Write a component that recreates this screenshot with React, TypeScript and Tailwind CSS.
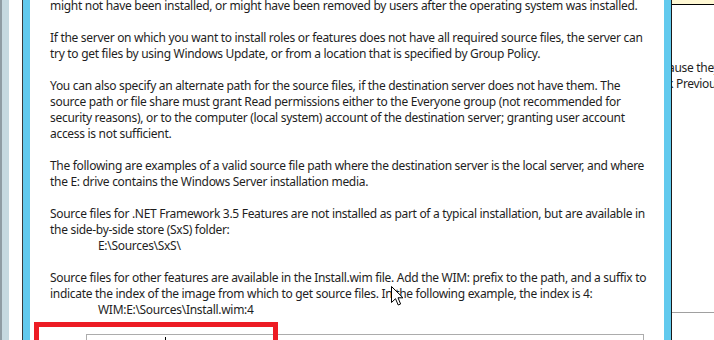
import React from "react";

const paragraphs: string[][] = [
  ["might not have been installed, or might have been removed by users after the operating system was installed."],
  [
    "If the server on which you want to install roles or features does not have all required source files, the server can",
    "try to get files by using Windows Update, or from a location that is specified by Group Policy.",
  ],
  [
    "You can also specify an alternate path for the source files, if the destination server does not have them. The",
    "source path or file share must grant Read permissions either to the Everyone group (not recommended for",
    "security reasons), or to the computer (local system) account of the destination server; granting user account",
    "access is not sufficient.",
  ],
  [
    "The following are examples of a valid source file path where the destination server is the local server, and where",
    "the E: drive contains the Windows Server installation media.",
  ],
];

/* ─── Mouse pointer overlay ─────────────────────────── */
function Pointer() {
  return (
    <svg width="13" height="21" viewBox="0 0 13 21" className="absolute left-[361px] top-[286px]">
      <path d="M0.5 0.5 L0.5 16.5 L4.5 12.7 L7.2 19 L9.6 18 L7 11.8 L12 11.8 Z" fill="#fff" stroke="#000" strokeWidth="1" strokeLinejoin="miter" />
    </svg>
  );
}

export default function App() {
  return (
    <div className="w-[714px] h-[340px] overflow-hidden flex bg-white font-['Segoe_UI','Noto_Sans',sans-serif] text-[12px] tracking-[-0.3px] text-[#1e1e1e]">
      {/* left window edges */}
      <div className="w-[2px] shrink-0 bg-[#8f9ca3]" />
      <div className="w-[7px] shrink-0 bg-[#c6d9e0]" />
      <div className="w-[13px] shrink-0 bg-white" />
      <div className="w-px shrink-0 bg-[#3a3a3a]" />
      <div className="w-[7px] shrink-0 bg-[#62caee]" />

      {/* dialog content */}
      <div className="w-[634px] shrink-0 relative overflow-hidden">
        <div className="pl-[20px] mt-[-2px] leading-[16px] whitespace-nowrap">
          {paragraphs.map((p, i) => (
            <div key={i} className="mb-[16px]">
              {p.map((l, j) => <div key={j}>{l}</div>)}
            </div>
          ))}
          <div className="mb-[16px]">
            <div>Source files for .NET Framework 3.5 Features are not installed as part of a typical installation, but are available in</div>
            <div>the side-by-side store (SxS) folder:</div>
            <div className="pl-[48px]">E:\Sources\SxS\</div>
          </div>
          <div>
            <div>Source files for other features are available in the Install.wim file. Add the WIM: prefix to the path, and a suffix to</div>
            <div>indicate the index of the image from which to get source files. In the following example, the index is 4:</div>
            <div className="pl-[48px]">WIM:E:\Sources\Install.wim:4</div>
          </div>
        </div>

        {/* path field */}
        <div className="ml-[56px] mt-[16px] w-[558px] h-[20px] border border-b-0 border-[#acacac] relative">
          <div className="absolute left-[78px] top-[2px] w-px h-[16px] bg-black" />
        </div>

        {/* red annotation */}
        <div className="absolute left-[4px] top-[322px] w-[244px] h-[40px] border-[5px] border-b-0 border-[#ed1c24]" />

        <Pointer />
      </div>

      {/* right window edges */}
      <div className="w-[7px] shrink-0 bg-[#62caee]" />
      <div className="w-px shrink-0 bg-[#1a1a1a]" />
      <div className="w-[42px] shrink-0 overflow-hidden flex flex-col">
        <div className="h-[4px] bg-[#fff8d4]" />
        <div className="h-px bg-black" />
        <div className="mt-[55px] leading-[16px] whitespace-nowrap">
          <div className="ml-[-4px]">ause they</div>
          <div className="ml-[-5px]">k Previous</div>
        </div>
        <div className="mt-[220px] h-px bg-[#a0a0a0]" />
      </div>
    </div>
  );
}
